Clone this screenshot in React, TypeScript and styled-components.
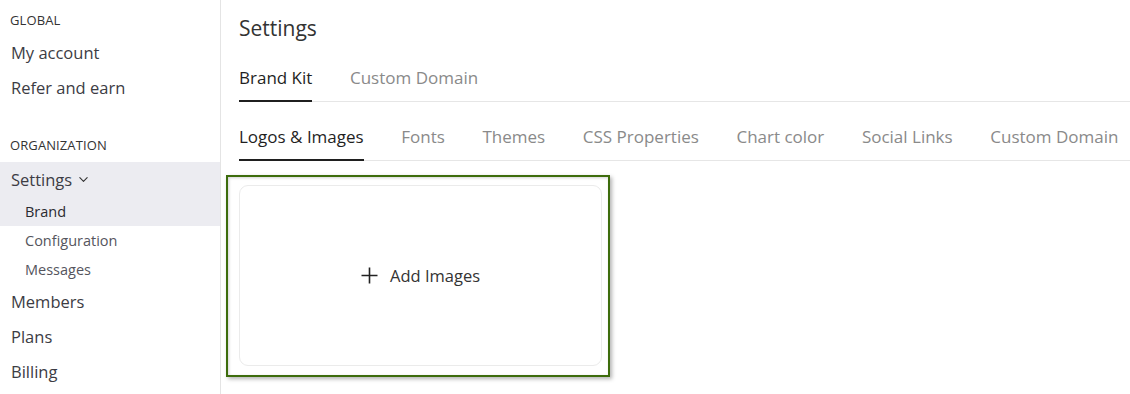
import styled, { createGlobalStyle } from 'styled-components';

const GlobalStyle = createGlobalStyle`
  html, body {
    margin: 0;
    padding: 0;
    background: #fff;
    font-family: 'Open Sans', 'Noto Sans', sans-serif;
  }
`;

const Page = styled.div`
  display: flex;
  width: 1130px;
  height: 394px;
  overflow: hidden;
`;

const Sidebar = styled.nav`
  width: 220px;
  flex-shrink: 0;
  border-right: 1px solid #e4e4e4;
  display: flex;
  flex-direction: column;
  padding-top: 11px;
`;

const SectionLabel = styled.div<{ $gap?: number; $after?: number }>`
  font-size: 13px;
  color: #333;
  padding: 0 10px;
  height: 18px;
  line-height: 18px;
  margin-top: ${(p) => p.$gap ?? 0}px;
  margin-bottom: ${(p) => p.$after ?? 6}px;
  letter-spacing: 0.1px;
`;

const NavItem = styled.div<{ $active?: boolean }>`
  font-size: 16.5px;
  color: #3c3c44;
  padding: 0 11px;
  height: 35px;
  line-height: 35px;
  display: flex;
  align-items: center;
  gap: 6px;
  background: ${(p) => (p.$active ? '#ececf1' : 'transparent')};
`;

const SubItem = styled.div<{ $active?: boolean }>`
  font-size: 14.5px;
  color: ${(p) => (p.$active ? '#2a2a30' : '#55555d')};
  padding: 0 25px;
  height: 29px;
  line-height: 29px;
  background: ${(p) => (p.$active ? '#ececf1' : 'transparent')};
`;

const Main = styled.main`
  flex: 1;
  padding: 14px 0 0 18px;
  display: flex;
  flex-direction: column;
`;

const Title = styled.h1`
  margin: 0;
  font-size: 21px;
  font-weight: 400;
  color: #333;
  line-height: 28px;
`;

const TabBar = styled.div<{ $top: number }>`
  display: flex;
  gap: 37.6px;
  border-bottom: 1px solid #e6e6e6;
  margin-top: ${(p) => p.$top}px;
`;

const Tab = styled.div<{ $active?: boolean }>`
  font-size: 17px;
  line-height: 24px;
  padding-bottom: 10px;
  color: ${(p) => (p.$active ? '#1f1f1f' : '#8a8a8a')};
  border-bottom: 2px solid ${(p) => (p.$active ? '#1f1f1f' : 'transparent')};
  margin-bottom: -1px;
  white-space: nowrap;
`;

const Selection = styled.div`
  margin-top: 14px;
  margin-left: -13px;
  width: 384px;
  height: 202px;
  border: 2px solid #3d6c0c;
  box-shadow: 2px 2px 4px rgba(0, 0, 0, 0.3), inset 1px 1px 3px rgba(0, 0, 0, 0.18);
  padding: 8px 6px 9px 11px;
  box-sizing: border-box;
  display: flex;
`;

const DropCard = styled.button`
  flex: 1;
  border: 1px solid #ebebeb;
  border-radius: 9px;
  background: #fff;
  display: flex;
  align-items: center;
  justify-content: center;
  gap: 12px;
  padding: 0;
  font-family: inherit;
  font-size: 16.5px;
  color: #333;
  cursor: pointer;
`;

const ChevronDown = () => (
  <svg width="11" height="11" viewBox="0 0 12 12" fill="none">
    <path d="M2 4l4 4 4-4" stroke="#333" strokeWidth="1.2" strokeLinecap="round" strokeLinejoin="round" />
  </svg>
);

const PlusIcon = () => (
  <svg width="17" height="17" viewBox="0 0 17 17" fill="none">
    <path d="M8.5 0.5v16M0.5 8.5h16" stroke="#222" strokeWidth="1.6" />
  </svg>
);

const SUB_TABS = ['Logos & Images', 'Fonts', 'Themes', 'CSS Properties', 'Chart color', 'Social Links', 'Custom Domain'];

export default function App() {
  return (
    <>
      <GlobalStyle />
      <Page>
        <Sidebar>
          <SectionLabel>GLOBAL</SectionLabel>
          <NavItem>My account</NavItem>
          <NavItem>Refer and earn</NavItem>
          <SectionLabel $gap={31} $after={8}>
            ORGANIZATION
          </SectionLabel>
          <NavItem $active>
            Settings <ChevronDown />
          </NavItem>
          <SubItem $active>Brand</SubItem>
          <SubItem>Configuration</SubItem>
          <SubItem>Messages</SubItem>
          <NavItem>Members</NavItem>
          <NavItem>Plans</NavItem>
          <NavItem>Billing</NavItem>
        </Sidebar>
        <Main>
          <Title>Settings</Title>
          <TabBar $top={24}>
            <Tab $active>Brand Kit</Tab>
            <Tab>Custom Domain</Tab>
          </TabBar>
          <TabBar $top={23}>
            {SUB_TABS.map((t, i) => (
              <Tab key={t} $active={i === 0}>
                {t}
              </Tab>
            ))}
          </TabBar>
          <Selection>
            <DropCard>
              <PlusIcon />
              Add Images
            </DropCard>
          </Selection>
        </Main>
      </Page>
    </>
  );
}
